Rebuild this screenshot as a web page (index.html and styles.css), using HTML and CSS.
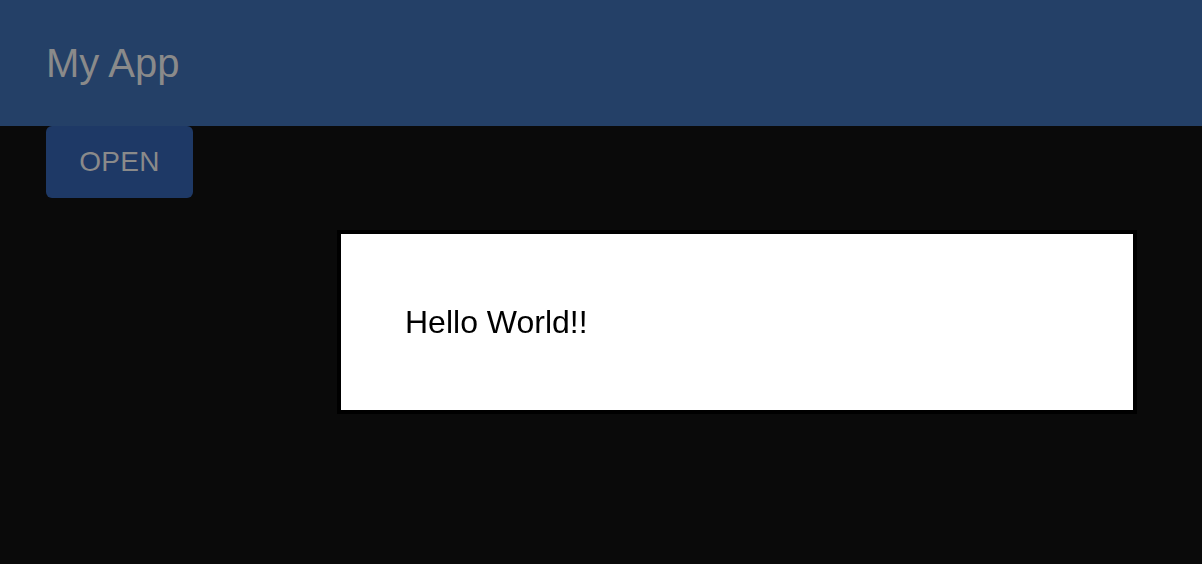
FILE: index.html
```html
<!DOCTYPE html>
<html>
<head>
<meta charset="utf-8">
<link rel="stylesheet" href="styles.css">
</head>
<body>
<header class="app-bar">
  <h1 class="app-title">My App</h1>
</header>
<main class="content">
  <button class="open-btn">OPEN</button>
</main>
<div class="overlay">
  <div class="dialog">
    <p class="dialog-text">Hello World!!</p>
  </div>
</div>
</body>
</html>
```

FILE: styles.css
```css
html, body {
  margin: 0;
  padding: 0;
  height: 100%;
}
body {
  background: #0a0a0a;
  font-family: "Liberation Sans", Arial, sans-serif;
  overflow: hidden;
}
.app-bar {
  height: 126px;
  box-sizing: border-box;
  background: #244067;
  padding: 40px 46px 0;
}
.app-title {
  margin: 0;
  font-size: 40px;
  font-weight: normal;
  line-height: 46px;
  color: #8a8a8a;
}
.content {
  padding: 0 46px;
}
.open-btn {
  display: block;
  width: 147px;
  height: 72px;
  border: none;
  border-radius: 6px;
  background: #1e3966;
  color: #8a8a8a;
  font-family: "Liberation Sans", Arial, sans-serif;
  font-size: 28px;
  letter-spacing: 0.3px;
  padding: 0;
}
.overlay {
  position: fixed;
  inset: 0;
  display: flex;
  justify-content: flex-end;
  align-items: flex-start;
  padding: 230px 65px 0 0;
}
.dialog {
  width: 792px;
  height: 176px;
  box-sizing: content-box;
  border: 4px solid #000;
  background: #fff;
  display: flex;
  align-items: center;
  padding: 0;
  box-shadow: 0 30px 70px 30px rgba(255,255,255,0.006);
}
.dialog-text {
  margin: 0 0 0 64px;
  font-size: 32px;
  color: #000;
}
```
